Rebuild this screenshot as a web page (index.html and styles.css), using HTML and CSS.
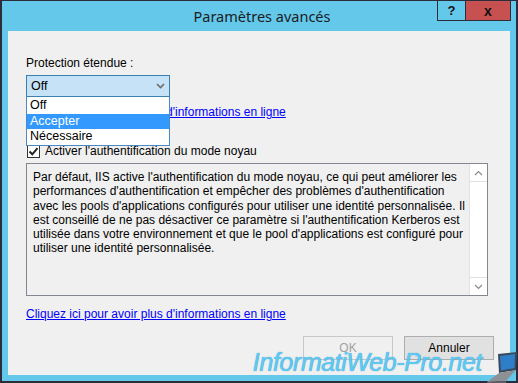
FILE: index.html
```html
<!DOCTYPE html>
<html lang="fr">
<head>
    <meta charset="UTF-8">
    <title>Paramètres avancés</title>
    <link rel="stylesheet" href="styles.css">
</head>
<body>

    <!-- Dialog window -->
    <div class="window">
        <div class="titlebar">
            <span class="title">Paramètres avancés</span>
            <div class="title-buttons">
                <span class="tb-help">?</span>
                <span class="tb-close">x</span>
            </div>
        </div>

        <div class="content">
            <div class="label">Protection étendue :</div>

            <!-- Combobox with open list -->
            <div class="combo">
                <div class="combo-box">
                    <span>Off</span>
                    <svg class="combo-arrow" width="9" height="6" viewBox="0 0 9 6">
                        <path d="M1 1 L4.5 4.5 L8 1" fill="none" stroke="#6d6d6d" stroke-width="1.6"/>
                    </svg>
                </div>
                <ul class="combo-list">
                    <li>Off</li>
                    <li class="selected">Accepter</li>
                    <li>Nécessaire</li>
                </ul>
            </div>

            <a href="#" class="link link-top">Cliquez ici pour avoir plus d'informations en ligne</a>

            <label class="check-row">
                <span class="checkbox">
                    <svg width="11" height="11" viewBox="0 0 11 11">
                        <path d="M1.5 5.5 L4.3 8.3 L9.5 2.2" fill="none" stroke="#222" stroke-width="2"/>
                    </svg>
                </span>
                Activer l'authentification du mode noyau
            </label>

            <!-- Description text box -->
            <div class="textbox">
                <p class="description">Par défaut, IIS active l'authentification du mode noyau, ce qui peut améliorer les<br>performances d'authentification et empêcher des problèmes d'authentification<br>avec les pools d'applications configurés pour utiliser une identité personnalisée. Il<br>est conseillé de ne pas désactiver ce paramètre si l'authentification Kerberos est<br>utilisée dans votre environnement et que le pool d'applications est configuré pour<br>utiliser une identité personnalisée.</p>
                <div class="scrollbar">
                    <span class="scroll-btn up">
                        <svg width="9" height="6" viewBox="0 0 9 6"><path d="M1 5 L4.5 1.5 L8 5" fill="none" stroke="#8a8a8a" stroke-width="1.2"/></svg>
                    </span>
                    <span class="scroll-track"></span>
                    <span class="scroll-btn down">
                        <svg width="9" height="6" viewBox="0 0 9 6"><path d="M1 1 L4.5 4.5 L8 1" fill="none" stroke="#8a8a8a" stroke-width="1.2"/></svg>
                    </span>
                </div>
            </div>

            <a href="#" class="link link-bottom">Cliquez ici pour avoir plus d'informations en ligne</a>

            <div class="buttons">
                <button class="btn" disabled>OK</button>
                <button class="btn">Annuler</button>
            </div>
        </div>

        <!-- Watermark -->
        <div class="watermark">
            <span class="watermark-text">InformatiWeb-Pro.net</span>
            <svg class="laptop" width="32" height="32" viewBox="0 0 32 32">
                <path d="M12 3 L31 1 L30 19 L13 22 Z" fill="#3a4a5c"/>
                <path d="M14 5 L29 3 L28.5 17 L15 19.5 Z" fill="#2f7fc8"/>
                <path d="M13 22 L30 19 L20 30 L1 31 Z" fill="#8d9097"/>
                <path d="M1 31 L20 30 L20 32 L1 32 Z" fill="#5d6068"/>
            </svg>
        </div>
    </div>

</body>
</html>
```

FILE: styles.css
```css
/* Reset */
body, html {
    margin: 0;
    padding: 0;
    width: 518px;
    height: 383px;
    overflow: hidden;
    font-family: 'Liberation Sans', Arial, sans-serif;
}

/* Window frame */
.window {
    position: relative;
    box-sizing: border-box;
    width: 518px;
    height: 383px;
    background: #63c8ea;
    border: 2px solid #2c2c3a;
    border-top-width: 1px;
    padding: 0 6px 6px 6px;
    display: flex;
    flex-direction: column;
}

/* Title bar */
.titlebar {
    height: 30px;
    flex-shrink: 0;
    position: relative;
    display: flex;
    justify-content: center;
}

.title {
    font-family: 'Noto Sans', sans-serif;
    font-size: 14.5px;
    color: #1c1c1c;
    line-height: 30px;
    padding-left: 6px;
}

.title-buttons {
    position: absolute;
    top: -1px;
    right: -1px;
    display: flex;
    height: 21px;
}

.tb-help, .tb-close {
    box-sizing: border-box;
    height: 21px;
    display: flex;
    justify-content: center;
    align-items: center;
    font-family: 'Liberation Sans', sans-serif;
    font-weight: bold;
    color: #111;
    border: 1px solid #2c2c3a;
}

.tb-help {
    width: 28px;
    font-size: 13px;
    border-right: none;
}

.tb-close {
    width: 46px;
    background: #c75050;
    font-size: 14px;
}

/* Client area */
.content {
    flex: 1;
    background: #f0f0f0;
    padding: 25px 16px 0 18px;
    font-size: 12px;
    color: #000;
    display: flex;
    flex-direction: column;
    align-items: flex-start;
}

.label {
    line-height: 15px;
}

/* Combobox */
.combo {
    position: relative;
    margin-top: 4px;
}

.combo-box {
    box-sizing: border-box;
    width: 144px;
    height: 22px;
    border: 1px solid #3c7fb1;
    background: #c5e2f6;
    display: flex;
    align-items: center;
    justify-content: space-between;
    padding: 0 4px 0 4px;
    font-size: 12.5px;
}

.combo-list {
    position: absolute;
    top: 22px;
    left: 0;
    box-sizing: border-box;
    width: 144px;
    margin: 0;
    padding: 1px 0 0 0;
    list-style: none;
    background: #fff;
    border: 1px solid #4a8ac4;
    border-top: none;
    font-size: 12.5px;
    z-index: 5;
}

.combo-list li {
    height: 15.5px;
    line-height: 15.5px;
    padding-left: 3px;
}

.combo-list li.selected {
    background: #3399ff;
    color: #fff;
}

/* Links */
.link {
    color: #0000ff;
    text-decoration: underline;
    line-height: 15px;
    font-size: 12px;
}

.link-top {
    margin-top: 8px;
}

.link-bottom {
    margin-top: 11px;
}

/* Checkbox */
.check-row {
    margin-top: 24px;
    display: flex;
    align-items: center;
    gap: 5px;
    line-height: 15px;
    padding-left: 1px;
}

.checkbox {
    box-sizing: border-box;
    width: 13px;
    height: 13px;
    border: 1px solid #333;
    background: #fff;
    display: flex;
    align-items: center;
    justify-content: center;
}

/* Read-only text box */
.textbox {
    box-sizing: border-box;
    margin-top: 4px;
    width: 462px;
    height: 133px;
    border: 1px solid #828790;
    background: #f0f0f0;
    display: flex;
}

.description {
    flex: 1;
    margin: 0;
    padding: 6px 0 0 6px;
    line-height: 14.3px;
    font-size: 12px;
}

.scrollbar {
    width: 17px;
    background: #fff;
    border-left: 1px solid #e3e3e3;
    display: flex;
    flex-direction: column;
}

.scroll-btn {
    height: 17px;
    display: flex;
    align-items: center;
    justify-content: center;
}

.scroll-btn.up {
    border-bottom: 1px solid #e0e0e0;
}

.scroll-btn.down {
    border-top: 1px solid #e0e0e0;
}

.scroll-track {
    flex: 1;
}

/* Buttons */
.buttons {
    align-self: flex-end;
    margin-top: 14px;
    display: flex;
    gap: 11px;
}

.btn {
    width: 90px;
    height: 24px;
    font-family: 'Liberation Sans', sans-serif;
    font-size: 12px;
    background: #e1e1e1;
    border: 1px solid #adadad;
    color: #000;
    padding: 0;
}

.btn:disabled {
    background: #f0f0f0;
    border-color: #c8c8c8;
    color: #a0a0a0;
}

/* Watermark */
.watermark {
    position: absolute;
    right: -2px;
    bottom: -2px;
    display: flex;
    align-items: flex-end;
}

.watermark-text {
    font-family: 'Liberation Sans', sans-serif;
    font-style: italic;
    font-size: 25px;
    letter-spacing: -0.4px;
    color: #5fc9f4;
    text-shadow: 0 0 1px #2a8fc4;
    margin-bottom: 6px;
    margin-right: 4px;
}

.laptop {
    display: block;
}
```
